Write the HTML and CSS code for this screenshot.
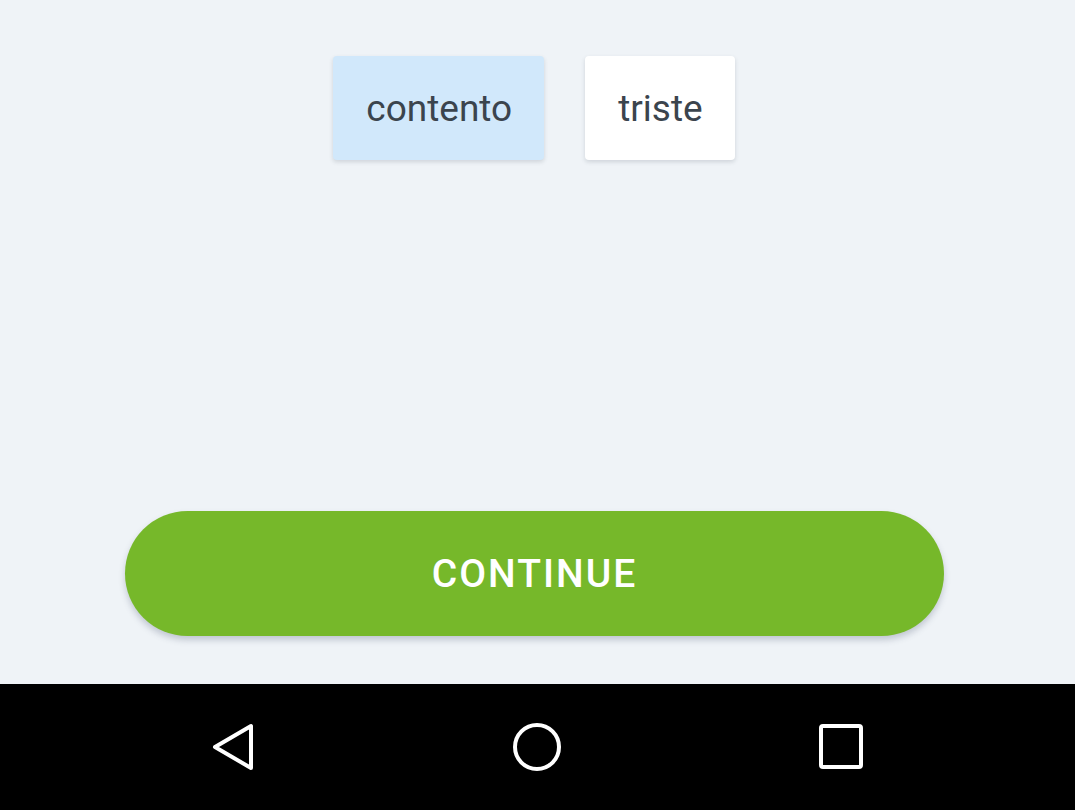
FILE: index.html
```html
<!DOCTYPE html>
<html>
<head>
<meta charset="utf-8">
<link rel="stylesheet" href="styles.css">
</head>
<body>
<div class="screen">
  <main class="content">
    <div class="chips">
      <div class="chip chip-selected">contento</div>
      <div class="chip">triste</div>
    </div>
    <button class="continue">CONTINUE</button>
  </main>
  <nav class="navbar">
    <svg class="nav-icon" viewBox="0 0 48 48" width="48" height="48">
      <path d="M41 3 L41 45 L5 24 Z" fill="none" stroke="#fff" stroke-width="4" stroke-linejoin="round"/>
    </svg>
    <svg class="nav-icon" viewBox="0 0 48 48" width="48" height="48">
      <circle cx="24" cy="24" r="22" fill="none" stroke="#fff" stroke-width="4"/>
    </svg>
    <svg class="nav-icon" viewBox="0 0 48 48" width="48" height="48">
      <rect x="5" y="3" width="40" height="41" rx="2" fill="none" stroke="#fff" stroke-width="4"/>
    </svg>
  </nav>
</div>
</body>
</html>
```
FILE: styles.css
```css
html, body {
  margin: 0;
  padding: 0;
}
body {
  width: 1075px;
  height: 810px;
  overflow: hidden;
  font-family: Roboto, "Liberation Sans", sans-serif;
  background: #eff3f7;
}
.screen {
  display: flex;
  flex-direction: column;
  height: 810px;
}
.content {
  height: 684px;
  display: flex;
  flex-direction: column;
  background: #eff3f7;
}
.chips {
  display: flex;
  justify-content: center;
  gap: 41px;
  margin-top: 56px;
  padding-right: 7px;
}
.chip {
  height: 104px;
  padding: 0 32px 0 33px;
  display: flex;
  align-items: center;
  font-size: 37px;
  color: #3b444d;
  background: #ffffff;
  border-radius: 4px;
  box-shadow: 0 2px 4px rgba(60, 70, 90, 0.18);
}
.chip-selected {
  background: #d1e8fb;
}
.continue {
  margin-top: auto;
  margin-bottom: 48px;
  margin-left: 125px;
  width: 819px;
  height: 125px;
  border: none;
  border-radius: 63px;
  background: #76b82a;
  color: #ffffff;
  font-family: Roboto, "Liberation Sans", sans-serif;
  font-weight: 500;
  font-size: 39px;
  letter-spacing: 2px;
  box-shadow: 0 4px 6px rgba(60, 70, 100, 0.25);
  padding: 0;
}
.navbar {
  height: 126px;
  background: #000;
  display: flex;
  justify-content: center;
  align-items: center;
  gap: 255px;
  padding-right: 2px;
}
.nav-icon {
  display: block;
}
```
